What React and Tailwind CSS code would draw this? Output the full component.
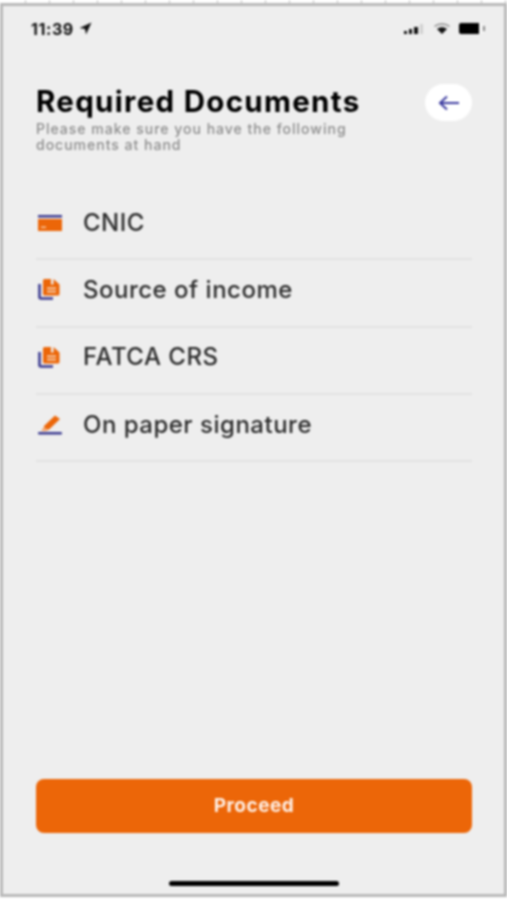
import React from 'react';

const NAVY = '#3b3a8f';
const ORANGE = '#ec6608';

const CardIcon = () => (
  <svg width="24" height="16" viewBox="0 0 24 16">
    <rect x="0" y="0" width="24" height="2.5" fill={NAVY} />
    <rect x="0" y="4" width="24" height="12" fill={ORANGE} />
    <rect x="3" y="11.5" width="5" height="1.5" fill="#f8c9a4" />
  </svg>
);

const DocIcon = () => (
  <svg width="22" height="21" viewBox="0 0 22 21">
    <path d="M1.500 5v13a1.500 1.500 0 0 0 1.500 1.500h12" fill="none" stroke={NAVY} strokeWidth="2.600" />
    <path d="M6.500 0H13v5.500h2.500V0L21.500 5.500V15a1.500 1.500 0 0 1-1.500 1.500H6.500A1.500 1.500 0 0 1 5 15V1.500A1.500 1.500 0 0 1 6.500 0z" fill={ORANGE} />
    <rect x="9" y="8.500" width="9" height="1.600" fill="#f8d9c0" />
    <rect x="9" y="11.800" width="9" height="1.600" fill="#f8d9c0" />
  </svg>
);

const SignIcon = () => (
  <svg width="24" height="21" viewBox="0 0 24 21">
    <path d="M6 12L17 1.500l5 3.500L11 15.500H6z" fill={ORANGE} />
    <path d="M3 17l3-4 4 2.500-1 1.500z" fill="#f4a36a" />
    <rect x="0" y="18" width="24" height="2.500" rx="1" fill={NAVY} />
  </svg>
);

const rows = [
  { label: 'CNIC', icon: <CardIcon /> },
  { label: 'Source of income', icon: <DocIcon /> },
  { label: 'FATCA CRS', icon: <DocIcon /> },
  { label: 'On paper signature', icon: <SignIcon /> },
];

const App = () => {
  return (
    <div className="w-[507px] h-[900px] bg-white overflow-hidden font-['Inter',sans-serif] blur-[0.8px]">
      {/* ruler ticks along the top edge */}
      <div className="h-[3px] flex pl-[25px] gap-[23px]">
        {Array.from({ length: 21 }).map((_, i) => (
          <div key={i} className="w-px h-full bg-[#c4c4c4]" />
        ))}
      </div>

      <div className="h-[894px] bg-[#eeeeee] border-[3px] border-[#b9b9b9] flex flex-col">
        {/* status bar */}
        <div className="flex items-center justify-between pl-[28px] pr-[19px] pt-[11px] h-[34px]">
          <div className="flex items-center gap-[5px]">
            <span className="text-[16px] font-bold tracking-[0.6px] text-[#111111] leading-none">11:39</span>
            <svg width="13" height="13" viewBox="0 0 12 12">
              <path d="M11.500 0.500L0.500 5.500l5 1 1 5z" fill="#111111" />
            </svg>
          </div>
          <div className="flex items-center gap-[9px]">
            <svg width="21" height="12" viewBox="0 0 21 12">
              <rect x="0" y="8" width="3" height="3" fill="#111111" />
              <rect x="5" y="6" width="3" height="5" fill="#111111" />
              <rect x="10" y="4" width="4" height="7" fill="#111111" />
              <rect x="16" y="1" width="3" height="10" fill="#d0d0d0" />
            </svg>
            <svg width="16" height="11" viewBox="0 0 16 11">
              <path d="M0.500 3.500C4.500 0 11.500 0 15.500 3.500" fill="none" stroke="#888888" strokeWidth="1.500" />
              <path d="M3 6c3-2.300 7-2.300 10 0L8 11z" fill="#111111" />
            </svg>
            <div className="flex items-center">
              <div className="w-[24px] h-[11px] bg-[#000000] rounded-[2px] border-r-[4px] border-[#f4f4f4]" />
              <div className="w-[2px] h-[5px] bg-[#888888]" />
            </div>
          </div>
        </div>

        <div className="flex-1 flex flex-col pl-[33px] pr-[32px]">
          {/* header */}
          <div className="flex items-start justify-between mt-[44px]">
            <div>
              <h1 className="text-[29.500px] leading-[34px] font-bold tracking-[1.300px] text-[#000000] whitespace-nowrap">Required Documents</h1>
              <p className="text-[14px] leading-[16px] font-medium tracking-[1px] text-[#8c8c8c] mt-[3px] whitespace-nowrap">
                Please make sure you have the following
                <br />
                documents at hand
              </p>
            </div>
            <div className="w-[47px] h-[37px] rounded-full bg-white flex items-center justify-center shrink-0">
              <svg width="22" height="16" viewBox="0 0 22 16" fill="none" stroke="#3b3a9f" strokeWidth="2">
                <path d="M21 8H2M9 1.500L2 8l7 6.500" />
              </svg>
            </div>
          </div>

          {/* document list */}
          <div className="mt-[40px]">
            {rows.map((row) => (
              <div key={row.label} className="h-[67.300px] pb-[6px] flex items-center border-b-2 border-[#e2e2e2]">
                <div className="w-[47px] pl-[2px] flex items-center">{row.icon}</div>
                <span className="text-[24px] font-medium tracking-[0.500px] text-[#2c2c2c]">{row.label}</span>
              </div>
            ))}
          </div>

          <div className="flex-1" />

          <button className="h-[54px] rounded-[8px] bg-[#ec6608] text-[#fff0e6] text-[19px] font-bold tracking-[0.500px]">
            Proceed
          </button>

          <div className="mt-[48px] mb-[8px] mx-auto w-[170px] h-[5px] rounded-full bg-black" />
        </div>
      </div>
    </div>
  );
};

export default App;
